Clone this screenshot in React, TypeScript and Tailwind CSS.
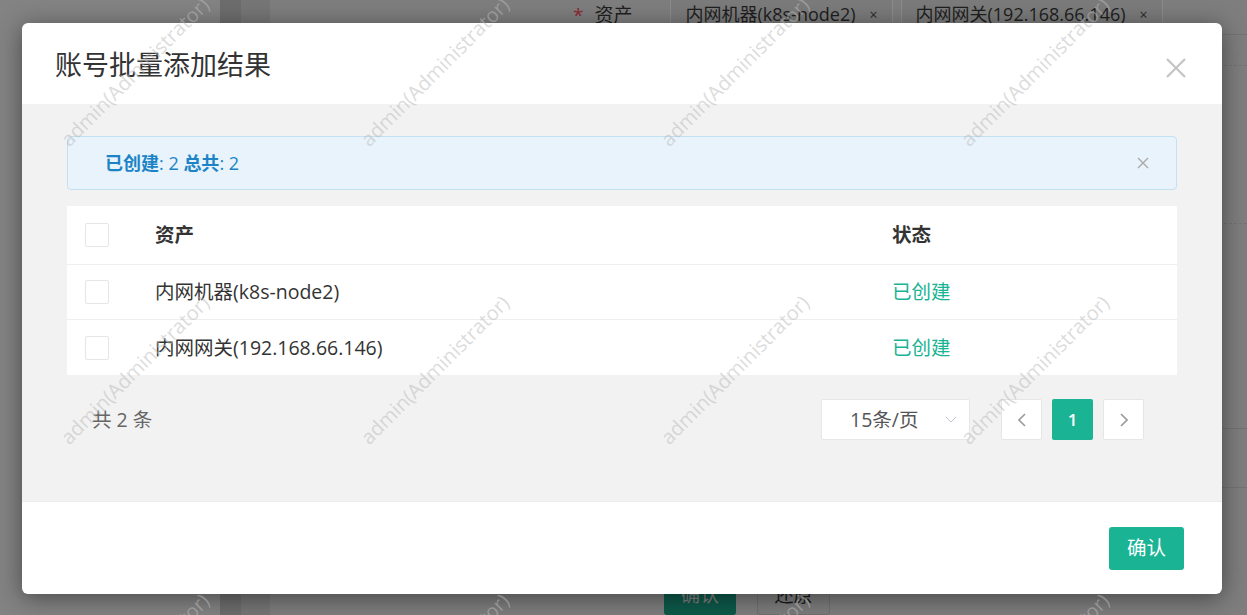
const rows = [
  { asset: "内网机器(k8s-node2)", status: "已创建" },
  { asset: "内网网关(192.168.66.146)", status: "已创建" },
];

const marks: { x: number; y: number }[] = [];
for (let j = -1; j < 3; j++) {
  for (let i = 0; i < 4; i++) {
    marks.push({ x: 135 + i * 300, y: 72 + j * 298 });
  }
}

function Checkbox() {
  return <div className="h-[24px] w-[24px] rounded-[2px] border border-[#e5e6e7] bg-white" />;
}

function Chevron({ dir }: { dir: "left" | "right" }) {
  return (
    <svg width="8" height="14" viewBox="0 0 8 14" fill="none">
      <path
        d={dir === "left" ? "M7 1 L1 7 L7 13" : "M1 1 L7 7 L1 13"}
        stroke="#9a9a9a"
        strokeWidth="1.6"
      />
    </svg>
  );
}

function BackgroundPage() {
  return (
    <div className="flex h-full">
      <div className="w-[220px] bg-[#838383]" />
      <div className="w-[21px] bg-[#6d6d6d]" />
      <div className="w-[29px] bg-[#767676]" />
      <div className="flex flex-1 flex-col bg-[#7e7e7e]">
        <div className="flex h-[36px] border-b border-[#737373] pl-[303px]">
          <div className="flex h-[30px] items-center text-[19px] text-[#1e1e1e]">
            <span className="text-[#8b2a33]">*</span>
            <span className="ml-[11px]">资产</span>
          </div>
          <div className="ml-[38px] flex h-[30px] gap-[8px]">
            <div className="flex items-center gap-[14px] border border-t-0 border-[#8c8c8c] bg-[#7b7b7b] px-[14px] text-[18px] text-[#1e1e1e]">
              内网机器(k8s-node2)
              <span className="text-[14px] text-[#2a2a2a]">×</span>
            </div>
            <div className="flex items-center gap-[14px] border border-t-0 border-[#8c8c8c] bg-[#7b7b7b] px-[14px] text-[18px] text-[#1e1e1e]">
              内网网关(192.168.66.146)
              <span className="text-[14px] text-[#2a2a2a]">×</span>
            </div>
          </div>
        </div>
        <div className="h-[33px] border-b border-dashed border-[#737373]" />
        <div className="h-[165px] border-b border-dashed border-[#737373]" />
        <div className="h-[213px] border-b border-[#737373]" />
        <div className="h-[62px] border-b border-[#737373]" />
        <div className="flex gap-[21px] pl-[394px] pt-[87px]">
          <div className="flex h-[40px] w-[72px] items-center justify-center rounded-[3px] bg-[#0d5a4a] text-[19px] text-[#7f7f7f]">
            确认
          </div>
          <div className="flex h-[40px] w-[73px] items-center justify-center rounded-[3px] border border-[#707070] bg-[#7d7d7d] text-[19px] text-[#1a1a1a]">
            还原
          </div>
        </div>
      </div>
    </div>
  );
}

export default function App() {
  return (
    <div className="relative h-[615px] w-full overflow-hidden bg-[#808080] font-['Open_Sans','Noto_Sans_CJK_SC',sans-serif]">
      <BackgroundPage />

      <div className="absolute left-[22px] top-[23px] flex h-[571px] w-[1200px] flex-col overflow-hidden rounded-[6px] bg-white shadow-[0_4px_24px_rgba(0,0,0,0.45)]">
        <div className="flex h-[81px] shrink-0 items-center justify-between pl-[33px] pr-[36px] pt-[3px]">
          <h3 className="text-[27px] text-[#333]">账号批量添加结果</h3>
          <svg width="20" height="20" viewBox="0 0 20 20" className="mt-[5px]">
            <path d="M1 1 L19 19 M19 1 L1 19" stroke="#c4c4c4" strokeWidth="2.2" />
          </svg>
        </div>

        <div className="flex flex-1 flex-col bg-[#f2f2f2] px-[45px] pt-[32px]">
          <div className="flex h-[54px] items-center justify-between rounded-[4px] border border-[#c4e0f3] bg-[#e8f3fb] pl-[37px] pr-[27px] text-[18px] text-[#1c84c6]">
            <p>
              <b>已创建</b>: 2 <b>总共</b>: 2
            </p>
            <svg width="12" height="12" viewBox="0 0 12 12">
              <path d="M1 1 L11 11 M11 1 L1 11" stroke="#a9a9a9" strokeWidth="1.4" />
            </svg>
          </div>

          <div className="mt-[16px] bg-white text-[19.5px] text-[#333]">
            <div className="flex h-[59px] items-center border-b border-[#efefef]">
              <div className="w-[88px] pl-[18px]">
                <Checkbox />
              </div>
              <div className="w-[737px] font-bold">资产</div>
              <div className="font-bold">状态</div>
            </div>
            {rows.map((r, i) => (
              <div
                key={r.asset}
                className={`flex h-[55px] items-center ${i < rows.length - 1 ? "border-b border-[#efefef]" : ""}`}
              >
                <div className="w-[88px] pl-[18px]">
                  <Checkbox />
                </div>
                <div className="w-[737px]">{r.asset}</div>
                <div className="text-[#1ab394]">{r.status}</div>
              </div>
            ))}
          </div>

          <div className="mt-[24px] flex items-center justify-between pl-[25px] pr-[33px]">
            <span className="text-[19.5px] text-[#666]">共 2 条</span>
            <div className="flex items-center">
              <div className="flex h-[41px] w-[149px] items-center justify-between rounded-[2px] border border-[#e7e7e7] bg-white pl-[28px] pr-[12px] text-[19.5px] text-[#555]">
                15条/页
                <svg width="12" height="7" viewBox="0 0 12 7" fill="none">
                  <path d="M1 1 L6 6 L11 1" stroke="#c0c4cc" strokeWidth="1" />
                </svg>
              </div>
              <div className="ml-[31px] flex h-[41px] w-[41px] items-center justify-center rounded-[2px] border border-[#e5e6e7] bg-white">
                <Chevron dir="left" />
              </div>
              <div className="ml-[10px] flex h-[41px] w-[41px] items-center justify-center rounded-[2px] bg-[#1ab394] text-[17px] font-semibold text-white">
                1
              </div>
              <div className="ml-[10px] flex h-[41px] w-[41px] items-center justify-center rounded-[2px] border border-[#e5e6e7] bg-white">
                <Chevron dir="right" />
              </div>
            </div>
          </div>
        </div>

        <div className="flex h-[93px] shrink-0 items-center justify-end border-t border-[#ececec] pr-[38px]">
          <button className="flex h-[43px] w-[75px] items-center justify-center rounded-[3px] bg-[#1ab394] text-[19.5px] text-white">
            确认
          </button>
        </div>
      </div>

      {/* watermark layer */}
      <div className="pointer-events-none absolute inset-0">
        {marks.map((m, k) => (
          <span
            key={k}
            className="absolute -translate-x-1/2 -translate-y-1/2 -rotate-45 whitespace-nowrap text-[20px] text-[rgba(185,185,185,0.5)]"
            style={{ left: m.x, top: m.y }}
          >
            admin(Administrator)
          </span>
        ))}
      </div>
    </div>
  );
}
